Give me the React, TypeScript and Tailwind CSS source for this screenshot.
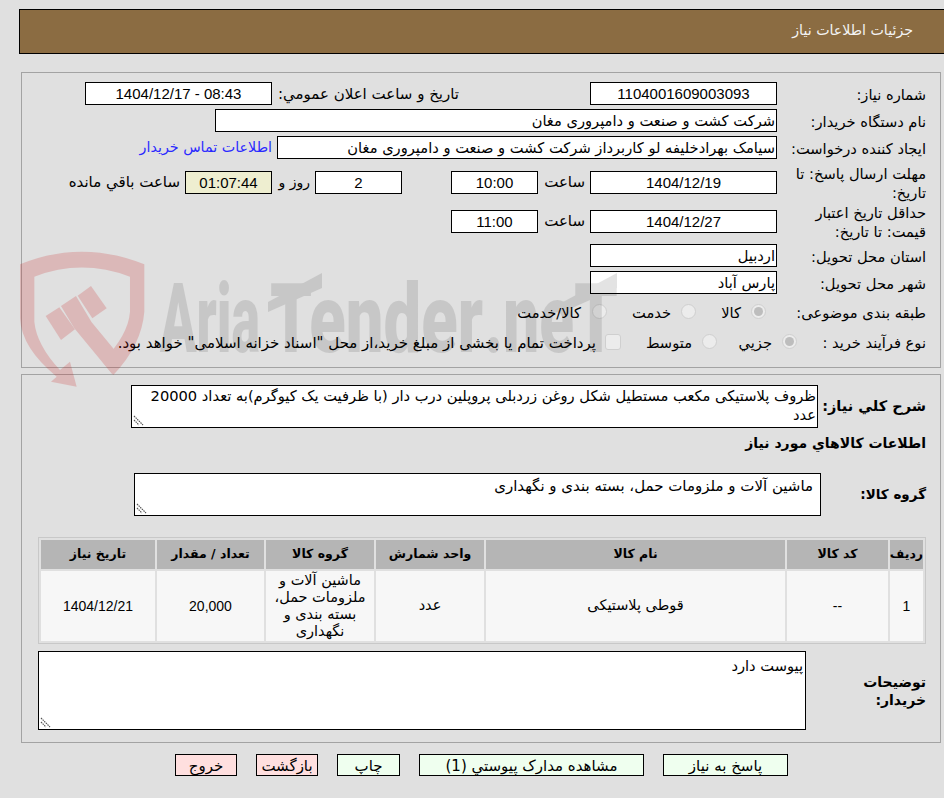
import React from "react";

const font = { fontFamily: '"DejaVu Sans", sans-serif' };

const Box = ({ className = "bg-white", children }: { className?: string; children?: React.ReactNode }) => (
  <div dir="ltr" className={`flex items-center justify-center h-[23px] border border-black font-['Liberation_Sans'] text-[15px] leading-none shrink-0 ${className}`}>
    {children}
  </div>
);

const TextBox = ({ className = "", children }: { className?: string; children?: React.ReactNode }) => (
  <div className={`flex items-center justify-start h-[23px] border border-black bg-white text-[14.67px] leading-none px-px pt-px shrink-0 whitespace-nowrap overflow-hidden ${className}`}>
    {children}
  </div>
);

const Label = ({ children, className = "w-[149px]" }: { children: React.ReactNode; className?: string }) => (
  <div className={`shrink-0 pt-px text-[14.67px] leading-[19px] ${className}`}>{children}</div>
);

const Grip = () => (
  <svg className="absolute left-[1px] bottom-[1px]" width="11" height="11" viewBox="0 0 11 11">
    <path d="M1 1l9 9M1 5l5 5" stroke="#555" strokeWidth="1.2" strokeDasharray="1.5 .8" fill="none" />
  </svg>
);

const Radio = ({ checked = false }: { checked?: boolean }) => (
  <span className="flex items-center justify-center w-[15px] h-[15px] rounded-full border border-[#cfcfcf] bg-[#ececec] shrink-0">
    {checked && <span className="w-[9px] h-[9px] rounded-full bg-[#bdbdbd]" />}
  </span>
);

const Watermark = () => (
  <svg className="absolute top-0 left-0 z-10 pointer-events-none [direction:ltr]" width="944" height="798" viewBox="0 0 944 798">
    <g transform="translate(15 245) scale(.3333)" fill="#c81e1e" opacity=".2">
      <path d="M15 58Q200-18 388 58L388 200Q380 300 295 390L262 350Q340 270 345 200L345 95Q200 40 58 95L58 230Q65 300 135 375L165 350L185 425L108 410L125 395Q20 310 15 220Z" />
      <path d="M138 183L183 153L230 232L318 338L292 388L178 250Z" />
      <path d="M92 213L133 187L180 253L138 285Z" />
      <path d="M188 152L228 123L275 190L232 220Z" />
    </g>
    <g fill="#000" opacity=".107" fontFamily="Roboto" fontWeight="900" fontSize="97">
      <text x="160" y="352" textLength="100" lengthAdjust="spacingAndGlyphs">Aria</text>
      <text x="270" y="352" textLength="213" lengthAdjust="spacingAndGlyphs">Tender</text>
      <text x="484" y="352" textLength="90" lengthAdjust="spacingAndGlyphs">.ne</text>
      <text x="574" y="352" textLength="44" lengthAdjust="spacingAndGlyphs">T</text>
      <path d="M268 302L322 273V288L268 312Z" />
      <path d="M563 302L617 273V288L563 312Z" />
    </g>
  </svg>
);

const columns = ["w-[33px]", "w-[101px]", "w-[299px]", "w-[108px]", "w-[108px]", "w-[107px]", "w-[114px]"];
const heads = ["رديف", "کد کالا", "نام کالا", "واحد شمارش", "گروه کالا", "تعداد / مقدار", "تاریخ نیاز"];

export default function App() {
  return (
    <div dir="rtl" style={font} className="relative h-[798px] overflow-hidden bg-[#e0e0e0] text-black pt-[9px]">
      <Watermark />

      <div className="ml-[19px] h-[45px] flex items-center bg-[#8b6c42] border-y border-l border-black pr-[31px] pb-px">
        <span className="text-[14.2px] text-[#f4f4f4]">جزئیات اطلاعات نیاز</span>
      </div>

      <section className="mr-[3px] w-[920px] h-[296px] mt-[18px] border border-[#a3a3a3] pt-[9px] pr-[14px]">
        <div className="flex items-center h-[23px]">
          <Label>شماره نیاز:</Label>
          <Box className="w-[187px] bg-white">1104001609003093</Box>
          <div className="w-[131px] shrink-0" />
          <div className="w-[181px] shrink-0 pt-px text-[15px] whitespace-nowrap">تاريخ و ساعت اعلان عمومي:</div>
          <Box className="w-[187px] mr-[6px] bg-white">1404/12/17 - 08:43</Box>
        </div>
        <div className="flex items-center h-[23px] mt-[4px]">
          <Label>نام دستگاه خریدار:</Label>
          <TextBox className="w-[562px]">شرکت کشت و صنعت و دامپروری مغان</TextBox>
        </div>
        <div className="flex items-center h-[23px] mt-[4px]">
          <Label>ایجاد کننده درخواست:</Label>
          <TextBox className="w-[500px]">سیامک بهرادخلیفه لو کاربرداز شرکت کشت و صنعت و دامپروری مغان</TextBox>
          <a className="mr-[5px] pt-px text-[14.3px] text-[#2a2aff] whitespace-nowrap">اطلاعات تماس خریدار</a>
        </div>
        <div className="flex items-center h-[38px] mt-[4px]">
          <Label>مهلت ارسال پاسخ: تا<br />تاریخ:</Label>
          <Box className="w-[187px] bg-white">1404/12/19</Box>
          <div className="w-[52px] shrink-0 pr-[5px] text-[15px]">ساعت</div>
          <Box className="w-[87px] bg-white">10:00</Box>
          <div className="w-[49px] shrink-0" />
          <Box className="w-[87px] bg-white">2</Box>
          <div className="w-[43px] shrink-0 pr-[5px] text-[14px]">روز و</div>
          <Box className="w-[87px] bg-[#eeeed0]">01:07:44</Box>
          <div className="mr-[5px] text-[15px] whitespace-nowrap">ساعت باقي مانده</div>
        </div>
        <div className="flex items-center h-[38px] mt-[1px]">
          <Label>حداقل تاریخ اعتبار<br />قیمت: تا تاریخ:</Label>
          <Box className="w-[187px] bg-white">1404/12/27</Box>
          <div className="w-[52px] shrink-0 pr-[5px] text-[15px]">ساعت</div>
          <Box className="w-[87px] bg-white">11:00</Box>
        </div>
        <div className="flex items-center h-[23px] mt-[4px]">
          <Label>استان محل تحویل:</Label>
          <TextBox className="w-[187px]">اردبیل</TextBox>
        </div>
        <div className="flex items-center h-[23px] mt-[4px]">
          <Label>شهر محل تحویل:</Label>
          <TextBox className="w-[187px]">پارس آباد</TextBox>
        </div>
        <div className="flex items-center h-[19px] mt-[8px] text-[14.67px]">
          <Label>طبقه بندی موضوعی:</Label>
          <div className="w-[11px] shrink-0" />
          <Radio checked />
          <span className="w-[55px] pr-[10px] shrink-0 mt-[3px]">کالا</span>
          <Radio />
          <span className="w-[74px] pr-[10px] shrink-0 mt-[3px]">خدمت</span>
          <Radio />
          <span className="pr-[11px] mt-[3px]">کالا/خدمت</span>
        </div>
        <div className="flex items-center h-[19px] mt-[11px] text-[14.67px]">
          <Label className="w-[129px]">نوع فرآیند خرید :</Label>
          <Radio checked />
          <span className="w-[65px] pr-[10px] shrink-0 mt-[3px]">جزیي</span>
          <Radio />
          <span className="w-[81px] pr-[10px] shrink-0 mt-[3px]">متوسط</span>
          <span className="w-[16px] h-[16px] rounded-[3px] border border-[#cfcfcf] bg-[#ececec] shrink-0" />
          <span className="pr-[9px] mt-[3px] text-[15px] whitespace-nowrap">پرداخت تمام یا بخشی از مبلغ خرید،از محل "اسناد خزانه اسلامی" خواهد بود.</span>
        </div>
      </section>

      <section className="mr-[3px] w-[920px] h-[369px] mt-[6px] border border-[#a3a3a3] pt-[10px] pr-[14px]">
        <div className="flex items-center">
          <div className="w-[108px] shrink-0 text-[14.5px] font-bold whitespace-nowrap">شرح كلي نياز:</div>
          <div className="relative w-[687px] h-[43px] border border-black bg-white px-px text-[14.67px] leading-[19px]">
            ظروف پلاستیکی مکعب مستطیل شکل روغن زردبلی پروپلین درب دار (با ظرفیت یک کیوگرم)به تعداد 20000 عدد
            <Grip />
          </div>
        </div>
        <div className="mt-[5px] h-[20px] text-[14px] font-bold leading-[20px]">اطلاعات كالاهاي مورد نياز</div>
        <div className="flex items-center mt-[20px]">
          <div className="w-[105px] shrink-0 text-[13.5px] font-bold">گروه کالا:</div>
          <div className="relative w-[687px] h-[43px] border border-black bg-white pr-[7px] pt-[3px] text-[15px] leading-[19px]">
            ماشین آلات و ملزومات حمل، بسته بندی و نگهداری
            <Grip />
          </div>
        </div>

        <table className="mt-[21px] w-[888px] table-fixed border border-[#c8c8c8] border-separate border-spacing-[2px] text-[12.5px]">
          <colgroup>
            {columns.map((c, i) => (
              <col key={i} className={c} />
            ))}
          </colgroup>
          <thead>
            <tr className="h-[29px] bg-[#b5b5b5]">
              {heads.map((h) => (
                <th key={h} className="font-bold p-0">{h}</th>
              ))}
            </tr>
          </thead>
          <tbody>
            <tr className="h-[70px] bg-[#f7f7f7] text-center align-middle text-[14.5px]">
              <td className="p-0 font-['Liberation_Sans'] text-[14px]">1</td>
              <td className="p-0 font-['Liberation_Sans'] text-[14px]">--</td>
              <td className="p-0">قوطی پلاستیکی</td>
              <td className="p-0">عدد</td>
              <td className="p-0 px-[8px] leading-[17px]">ماشین آلات و ملزومات حمل، بسته بندی و نگهداری</td>
              <td className="p-0 font-['Liberation_Sans'] text-[14px]">20,000</td>
              <td className="p-0 font-['Liberation_Sans'] text-[14px]">1404/12/21</td>
            </tr>
          </tbody>
        </table>

        <div className="flex items-center mt-[7px]">
          <div className="w-[120px] shrink-0 pl-[40px] text-[14px] font-bold leading-[18px]">توضیحات خریدار:</div>
          <div className="relative w-[768px] h-[79px] border border-black bg-white pr-[2px] pt-[4px] text-[14.67px] leading-[19px]">
            پیوست دارد
            <Grip />
          </div>
        </div>
      </section>

      <div className="flex mt-[11px] mr-[156px] gap-[19px] text-[15px]">
        <button className="w-[125px] h-[22px] border border-black bg-[#efffef]">پاسخ به نیاز</button>
        <button className="w-[225px] h-[22px] border border-black bg-[#efffef]">مشاهده مدارک پیوستي (1)</button>
        <button className="w-[63px] h-[22px] border border-black bg-[#efffef]">چاپ</button>
        <button className="w-[62px] h-[22px] border border-black bg-[#ffdfdf]">بازگشت</button>
        <button className="w-[62px] h-[22px] border border-black bg-[#ffdfdf]">خروج</button>
      </div>
    </div>
  );
}
